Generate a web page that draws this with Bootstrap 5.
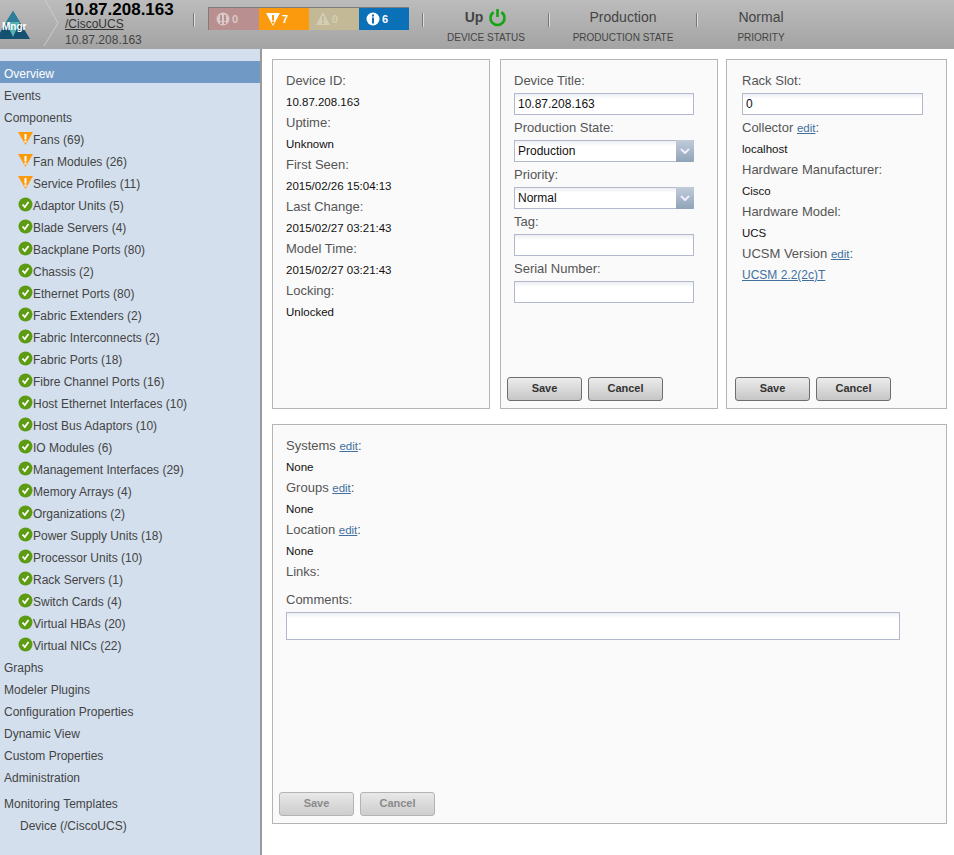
<!DOCTYPE html>
<html lang="en">
<head>
    <meta charset="UTF-8">
    <meta name="viewport" content="width=device-width, initial-scale=1.0">
    <title>10.87.208.163</title>
    <link href="https://cdn.jsdelivr.net/npm/bootstrap@5.3.0/dist/css/bootstrap.min.css" rel="stylesheet">
    <style>
        html, body { height: 100%; }
        body {
            background: #fff;
            font-family: "Liberation Sans", Arial, sans-serif;
            color: #444;
            overflow: hidden;
        }
        .top-bar {
            height: 49px;
            background: linear-gradient(#bcbcbc, #a3a3a3);
            overflow: hidden;
        }
        .logo-box { width: 43px; height: 49px; position: relative; flex: none; overflow: hidden; }
        .logo-text {
            position: absolute; left: 2px; top: 19px;
            font-size: 10px; font-weight: 700; color: #fff;
        }
        .crumb-arrow { width: 22px; height: 49px; flex: none; }
        .dev-info { width: 128px; flex: none; line-height: 1; }
        .dev-name { font-size: 17px; font-weight: 700; color: #000; margin-top: 1px; height: 17px; white-space: nowrap; }
        .dev-class { font-size: 12px; color: #333; text-decoration: underline; display: block; }
        .dev-sub { font-size: 12px; color: #444; margin-top: 4px; }
        .bar-sep { width: 1px; height: 14px; background: #777; border-right: 1px solid #ddd; box-sizing: content-box; flex: none; margin-top: 13px; }
        .sep-after-events { margin-left: 13px; }
        .event-box { display: flex; height: 23px; margin: 7px 0 0 13px; border-top: 1px solid #7d7d7d; border-left: 1px solid #7d7d7d; flex: none; }
        .event-cell {
            width: 50px; display: flex; align-items: center; padding-left: 7px; gap: 2px;
            font-size: 11px; font-weight: 700; color: #fff;
        }
        .ev-crit { background: #b98f8f; color: #d9c9c9; }
        .ev-err { background: #fc9a0e; }
        .ev-warn { background: #c3b997; color: #d3cdb8; }
        .ev-info { background: #0a70b8; }
        .stat-col { text-align: center; flex: none; }
        .stat-val { font-size: 14px; color: #444; height: 20px; line-height: 20px; margin-top: 7px; display: flex; justify-content: center; align-items: center; gap: 5px; }
        .stat-lbl { font-size: 10px; color: #444; margin-top: 3px; white-space: nowrap; }
        .col-status, .col-priority { width: 124px; }
        .col-prod { width: 146px; }
        .col-priority { padding-left: 2px; }
        .main-wrap { height: 806px; }
        .side-nav {
            width: 262px; flex: none; height: 100%;
            background: #d3dfed; border-right: 2px solid #9a9a9a;
            padding-top: 12px; font-size: 12px; color: #444;
        }
        .nav-row { height: 22px; line-height: 26px; padding-left: 4px; white-space: nowrap; }
        .nav-row.is-active { background: #7099c6; color: #fff; }
        .nav-sub { display: flex; align-items: flex-start; padding-left: 18px; }
        .nav-sub svg { flex: none; width: 15px; height: 15px; margin-top: 4px; }
        .nav-indent { padding-left: 20px; }
        .nav-gap { margin-top: 4px; }
        .content-area { padding: 10px 7px 0 10px; width: 692px; }
        .top-panels { display: flex; height: 350px; margin-bottom: 15px; }
        .form-panel {
            background: #fafafa; border: 1px solid #b4b4b4;
            display: flex; flex-direction: column;
            padding: 11px 13px 7px 13px; height: 100%;
        }
        .panel-a { width: 218px; margin-right: 10px; }
        .panel-b { width: 218px; margin-right: 8px; }
        .panel-c { width: 221px; padding-left: 15px; }
        .panel-c .fld-input { width: 181px; }
        .panel-wide { height: 400px; }
        .fld-label { font-size: 13px; color: #555; height: 22px; line-height: 19px; }
        .fld-value { font-size: 11.5px; color: #111; height: 20px; line-height: 19px; }
        .fld-value a { color: #41709f; font-size: 12px; }
        .fld-label a { color: #41709f; font-size: 11.5px; }
        .fld-input {
            display: block; width: 180px; height: 22px;
            border: 1px solid #b4b8cf; background: linear-gradient(#eceef3, #fff 5px);
            font-size: 12px; color: #111; line-height: 20px; padding: 0 3px;
        }
        .fld-select { position: relative; padding-right: 20px; }
        .sel-arrow {
            position: absolute; right: -1px; top: -1px; width: 18px; height: 22px;
            background: linear-gradient(#c2ccd9, #8fa3b8); border-radius: 0 2px 2px 0;
            display: flex; align-items: center; justify-content: center;
        }
        .fld-gap { margin-top: 3px; }
        .fld-gap-lg { margin-top: 6px; }
        .panel-wide .fld-input.fld-wide { width: 614px; height: 28px; }
        .btn-row { margin-top: auto; display: flex; gap: 6px; margin-left: -7px; }
        .btn-zen {
            width: 75px; height: 24px; padding: 0 0 2px; font-size: 11px; font-weight: 700;
            color: #333; background: linear-gradient(#ececec, #c6c6c6);
            border: 1px solid #6e6e6e; border-radius: 3px; font-family: inherit;
        }
        .btn-zen:disabled { color: #8a8a8a; border-color: #b4b4b4; opacity: 1; background: linear-gradient(#e8e8e8, #cdcdcd); }
    </style>
</head>
<body>
    <div class="top-bar d-flex align-items-start">
        <div class="logo-box">
            <svg width="30" height="39" viewBox="0 0 30 39" style="position:absolute;left:0;top:10px">
                <polygon points="13,1 30,29 -4,29" fill="#14506f"/>
                <polygon points="13,1 20,12 6,12" fill="#2f7f9a"/>
                <polygon points="6,12 20,12 13,27" fill="#57b1ae"/>
            </svg>
            <span class="logo-text">Mngr</span>
        </div>
        <svg class="crumb-arrow" viewBox="0 0 22 49"><polyline points="2,0 15,23 1,46" fill="none" stroke="#ccc" stroke-width="1"/></svg>
        <div class="dev-info">
            <div class="dev-name">10.87.208.163</div>
            <a class="dev-class">/CiscoUCS</a>
            <div class="dev-sub">10.87.208.163</div>
        </div>
        <div class="bar-sep"></div>
        <div class="event-box">
            <div class="event-cell ev-crit">
                <svg width="14" height="14" viewBox="0 0 14 14"><circle cx="7" cy="7" r="6.5" fill="#d9c9c9"/><rect x="4" y="3" width="2" height="6" fill="#b98f8f"/><rect x="8" y="3" width="2" height="6" fill="#b98f8f"/><rect x="4" y="10" width="2" height="2" fill="#b98f8f"/><rect x="8" y="10" width="2" height="2" fill="#b98f8f"/></svg>0
            </div>
            <div class="event-cell ev-err">
                <svg width="14" height="14" viewBox="0 0 14 14"><polygon points="0,1 14,1 7,14" fill="#fff"/><rect x="6" y="3" width="2" height="5.5" fill="#fc9a0e"/><rect x="6" y="9.5" width="2" height="2" fill="#fc9a0e"/></svg>7
            </div>
            <div class="event-cell ev-warn">
                <svg width="14" height="14" viewBox="0 0 14 14"><polygon points="7,0 14,13 0,13" fill="#d3cdb8"/><rect x="6" y="4" width="2" height="5" fill="#c3b997"/><rect x="6" y="10" width="2" height="2" fill="#c3b997"/></svg>0
            </div>
            <div class="event-cell ev-info">
                <svg width="14" height="14" viewBox="0 0 14 14"><circle cx="7" cy="7" r="6.5" fill="#fff"/><rect x="6" y="2.5" width="2" height="2" fill="#0a70b8"/><rect x="6" y="5.5" width="2" height="6" fill="#0a70b8"/></svg>6
            </div>
        </div>
        <div class="bar-sep sep-after-events"></div>
        <div class="stat-col col-status">
            <div class="stat-val"><b>Up</b>
                <svg width="19" height="19" viewBox="0 0 19 19"><path d="M5.6 4.2 A7 7 0 1 0 13.4 4.2" fill="none" stroke="#14a514" stroke-width="2.6"/><line x1="9.5" y1="1" x2="9.5" y2="9" stroke="#14a514" stroke-width="2.6"/></svg>
            </div>
            <div class="stat-lbl">DEVICE STATUS</div>
        </div>
        <div class="bar-sep"></div>
        <div class="stat-col col-prod">
            <div class="stat-val">Production</div>
            <div class="stat-lbl">PRODUCTION STATE</div>
        </div>
        <div class="bar-sep"></div>
        <div class="stat-col col-priority">
            <div class="stat-val">Normal</div>
            <div class="stat-lbl">PRIORITY</div>
        </div>
    </div>

    <div class="main-wrap d-flex">
        <div class="side-nav" id="sideNav"></div>
        <div class="content-area">
            <div class="top-panels">
                <div class="form-panel panel-a">
                    <div class="fld-label">Device ID:</div><div class="fld-value">10.87.208.163</div>
                    <div class="fld-label">Uptime:</div><div class="fld-value">Unknown</div>
                    <div class="fld-label">First Seen:</div><div class="fld-value">2015/02/26 15:04:13</div>
                    <div class="fld-label">Last Change:</div><div class="fld-value">2015/02/27 03:21:43</div>
                    <div class="fld-label">Model Time:</div><div class="fld-value">2015/02/27 03:21:43</div>
                    <div class="fld-label">Locking:</div><div class="fld-value">Unlocked</div>
                </div>
                <div class="form-panel panel-b">
                    <div class="fld-label">Device Title:</div><div class="fld-input">10.87.208.163</div>
                    <div class="fld-label fld-gap">Production State:</div>
                    <div class="fld-input fld-select">Production<span class="sel-arrow"><svg width="10" height="6" viewBox="0 0 10 6"><polyline points="1,1 5,5 9,1" fill="none" stroke="#eef" stroke-width="2"/></svg></span></div>
                    <div class="fld-label fld-gap">Priority:</div>
                    <div class="fld-input fld-select">Normal<span class="sel-arrow"><svg width="10" height="6" viewBox="0 0 10 6"><polyline points="1,1 5,5 9,1" fill="none" stroke="#eef" stroke-width="2"/></svg></span></div>
                    <div class="fld-label fld-gap">Tag:</div><div class="fld-input"></div>
                    <div class="fld-label fld-gap">Serial Number:</div><div class="fld-input"></div>
                    <div class="btn-row">
                        <button class="btn-zen" type="button">Save</button>
                        <button class="btn-zen" type="button">Cancel</button>
                    </div>
                </div>
                <div class="form-panel panel-c">
                    <div class="fld-label">Rack Slot:</div><div class="fld-input">0</div>
                    <div class="fld-label fld-gap">Collector <a href="#">edit</a>:</div><div class="fld-value">localhost</div>
                    <div class="fld-label">Hardware Manufacturer:</div><div class="fld-value">Cisco</div>
                    <div class="fld-label">Hardware Model:</div><div class="fld-value">UCS</div>
                    <div class="fld-label">UCSM Version <a href="#">edit</a>:</div><div class="fld-value"><a href="#">UCSM 2.2(2c)T</a></div>
                    <div class="btn-row">
                        <button class="btn-zen" type="button">Save</button>
                        <button class="btn-zen" type="button">Cancel</button>
                    </div>
                </div>
            </div>
            <div class="form-panel panel-wide">
                <div class="fld-label">Systems <a href="#">edit</a>:</div><div class="fld-value">None</div>
                <div class="fld-label">Groups <a href="#">edit</a>:</div><div class="fld-value">None</div>
                <div class="fld-label">Location <a href="#">edit</a>:</div><div class="fld-value">None</div>
                <div class="fld-label">Links:</div>
                <div class="fld-label fld-gap-lg">Comments:</div>
                <div class="fld-input fld-wide"></div>
                <div class="btn-row">
                    <button class="btn-zen" type="button" disabled>Save</button>
                    <button class="btn-zen" type="button" disabled>Cancel</button>
                </div>
            </div>
        </div>
    </div>

    <script src="https://cdn.jsdelivr.net/npm/bootstrap@5.3.0/dist/js/bootstrap.bundle.min.js"></script>
    <script>
        const warnIcon = '<svg viewBox="0 0 15 15"><polygon points="0,1 15,1 7.5,14" fill="#fc9a0e"/><rect x="6.5" y="3" width="2" height="5.5" fill="#fff"/><rect x="6.5" y="9.5" width="2" height="2" fill="#fff"/></svg>';
        const okIcon = '<svg viewBox="0 0 15 15"><circle cx="7.5" cy="7.5" r="7" fill="#5d9c12"/><polyline points="4.5,7.5 6.8,10 10.5,5" fill="none" stroke="#fff" stroke-width="1.8"/></svg>';
        const warned = ['Fans (69)', 'Fan Modules (26)', 'Service Profiles (11)'];
        const healthy = ['Adaptor Units (5)', 'Blade Servers (4)', 'Backplane Ports (80)', 'Chassis (2)', 'Ethernet Ports (80)',
            'Fabric Extenders (2)', 'Fabric Interconnects (2)', 'Fabric Ports (18)', 'Fibre Channel Ports (16)',
            'Host Ethernet Interfaces (10)', 'Host Bus Adaptors (10)', 'IO Modules (6)', 'Management Interfaces (29)',
            'Memory Arrays (4)', 'Organizations (2)', 'Power Supply Units (18)', 'Processor Units (10)', 'Rack Servers (1)',
            'Switch Cards (4)', 'Virtual HBAs (20)', 'Virtual NICs (22)'];
        const plain = ['Graphs', 'Modeler Plugins', 'Configuration Properties', 'Dynamic View', 'Custom Properties', 'Administration'];

        let html = '<div class="nav-row is-active">Overview</div><div class="nav-row">Events</div><div class="nav-row">Components</div>';
        warned.forEach(t => { html += `<div class="nav-row nav-sub">${warnIcon}<span>${t}</span></div>`; });
        healthy.forEach(t => { html += `<div class="nav-row nav-sub">${okIcon}<span>${t}</span></div>`; });
        plain.forEach(t => { html += `<div class="nav-row">${t}</div>`; });
        html += '<div class="nav-row nav-gap">Monitoring Templates</div><div class="nav-row nav-indent">Device (/CiscoUCS)</div>';
        document.getElementById('sideNav').innerHTML = html;
    </script>
</body>
</html>
